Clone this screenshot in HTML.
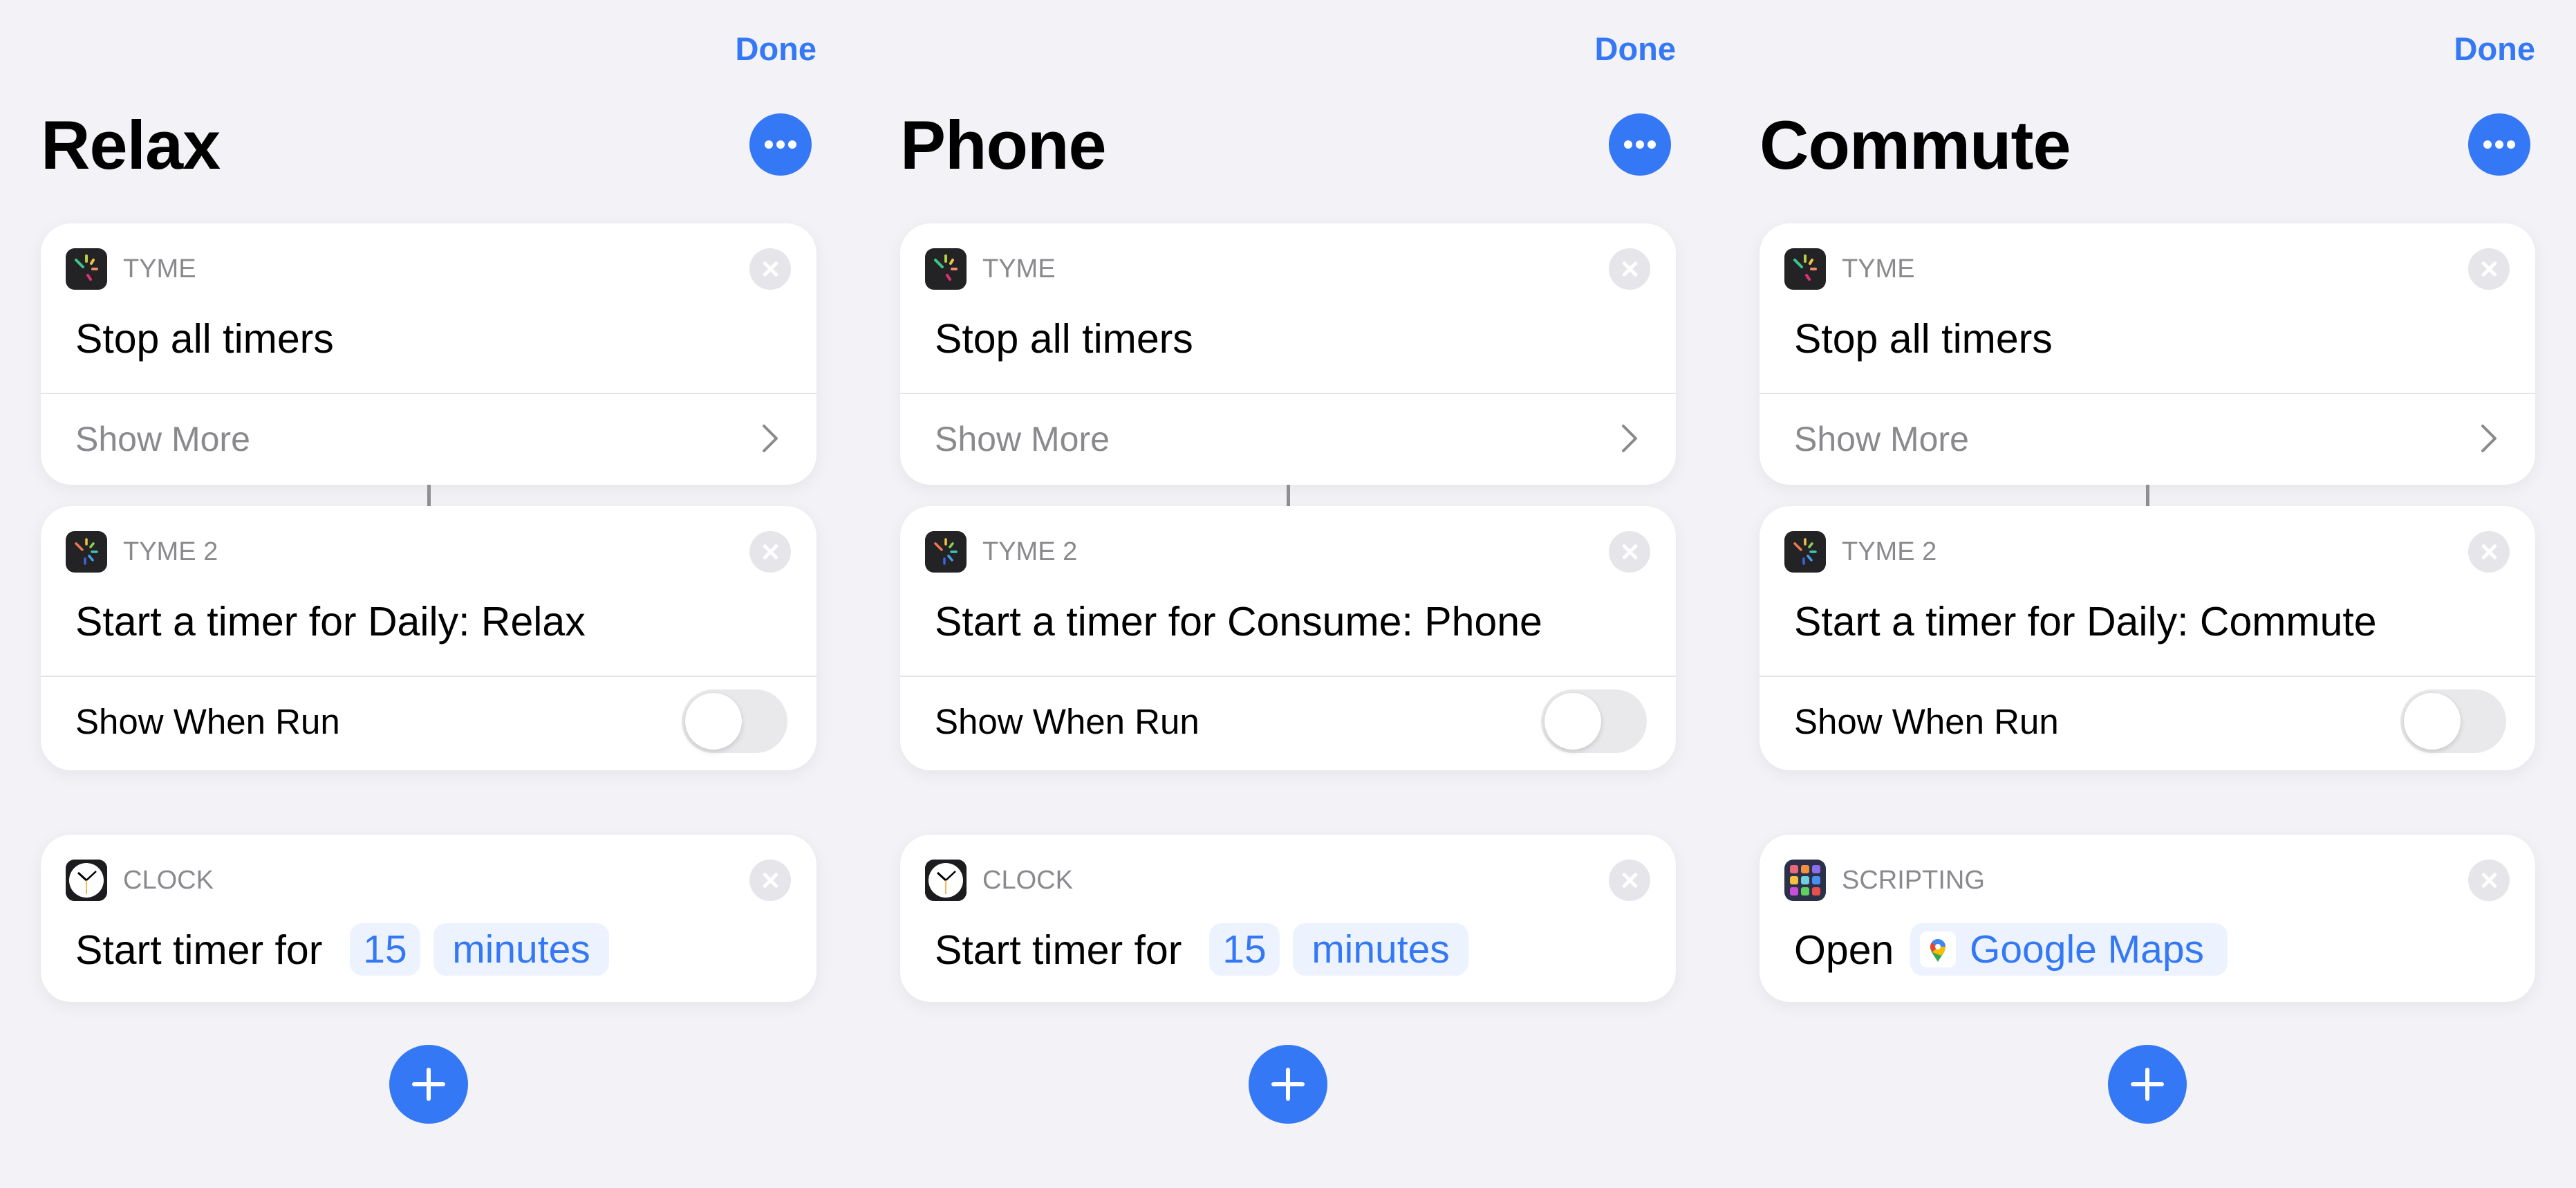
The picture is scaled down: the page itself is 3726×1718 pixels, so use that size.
<!DOCTYPE html>
<html><head><meta charset="utf-8"><style>
*{margin:0;padding:0;box-sizing:border-box}
body{width:3726px;height:1718px;background:#f2f2f7;font-family:"Liberation Sans",sans-serif;position:relative;overflow:hidden}
.p{position:absolute;top:0;width:1243px;height:1718px}
.done{position:absolute;right:62px;top:42px;font-size:47px;font-weight:bold;color:#3478f6;line-height:58px}
.title{position:absolute;left:59px;top:155px;font-size:99px;font-weight:bold;line-height:110px;color:#000;letter-spacing:-1px}
.more{position:absolute;left:1084px;top:164px;width:90px;height:90px;border-radius:50%;background:#3478f6}
.more i{position:absolute;top:39px;width:12px;height:12px;border-radius:50%;background:#fff}
.card{position:absolute;left:59px;width:1122px;background:#fff;border-radius:44px;box-shadow:0 6px 24px rgba(0,0,0,0.06)}
.ic{position:absolute;left:36px;top:36px;width:60px;height:60px;border-radius:13px;background:#232325;overflow:hidden}
.lab{position:absolute;left:119px;top:42px;font-size:38px;line-height:48px;color:#8a8a8e}
.x{position:absolute;left:1025px;top:36px;width:60px;height:60px;border-radius:50%;background:#e5e5ea}
.x:before,.x:after{content:"";position:absolute;left:28px;top:16px;width:5px;height:28px;background:#fff;border-radius:2px;transform:rotate(45deg)}
.x:after{transform:rotate(-45deg)}
.t{position:absolute;left:50px;top:134px;font-size:59px;line-height:66px;color:#000;white-space:nowrap}
.div{position:absolute;left:0;right:0;top:245px;height:2px;background:#e4e4e8}
.sm{position:absolute;left:50px;top:283px;font-size:50px;line-height:58px;color:#8a8a8e}
.sw{position:absolute;left:50px;top:283px;font-size:51px;line-height:58px;color:#000}
.chev{position:absolute;left:1040px;top:289px;width:30px;height:44px}
.tog{position:absolute;left:927px;top:265px;width:153px;height:92px;border-radius:46px;background:#e9e9eb}
.tog i{position:absolute;left:5px;top:5px;width:82px;height:82px;border-radius:50%;background:#fff;box-shadow:0 3px 8px rgba(0,0,0,0.15),0 0 1px rgba(0,0,0,0.1)}
.conn{position:absolute;left:618px;top:701px;width:5px;height:31px;background:#8e8e93}
.chip{position:absolute;top:128px;height:76px;border-radius:18px;background:#edf3fe;color:#3478f6;font-size:57px;line-height:76px;text-align:center}
.plus{position:absolute;left:563px;top:1511px;width:114px;height:114px;border-radius:50%;background:#3478f6}
.plus:before{content:"";position:absolute;left:54px;top:33px;width:6px;height:48px;background:#fff;border-radius:3px}
.plus:after{content:"";position:absolute;left:33px;top:54px;width:48px;height:6px;background:#fff;border-radius:3px}
</style></head><body>

<div class="p" style="left:0">
 <div class="done">Done</div>
 <div class="title">Relax</div>
 <div class="more"><i style="left:22px"></i><i style="left:39px"></i><i style="left:56px"></i></div>
 <div class="card" style="top:323px;height:378px">
  <div class="ic"><svg width="60" height="60" viewBox="0 0 60 60"><g stroke-width="4" stroke-linecap="round"><line x1="15" y1="17" x2="25" y2="27" stroke="#3cc58e"/><line x1="30" y1="11" x2="30" y2="19" stroke="#b5d040"/><line x1="40" y1="17" x2="37" y2="22" stroke="#f2c347"/><line x1="39" y1="30" x2="45" y2="30" stroke="#f08a6a"/><line x1="32" y1="39" x2="36" y2="45" stroke="#e0307a"/></g></svg></div>
  <div class="lab">TYME</div><div class="x"></div>
  <div class="t">Stop all timers</div>
  <div class="div"></div>
  <div class="sm">Show More</div>
  <svg class="chev" viewBox="0 0 30 44"><path d="M6 4 L24 22 L6 40" fill="none" stroke="#8a8a8e" stroke-width="4" stroke-linecap="round" stroke-linejoin="round"/></svg>
 </div>
 <div class="conn"></div>
 <div class="card" style="top:732px;height:382px">
  <div class="ic"><svg width="60" height="60" viewBox="0 0 60 60"><g stroke-width="3.5" stroke-linecap="round"><line x1="15" y1="18" x2="24" y2="27" stroke="#f07850"/><line x1="30" y1="12" x2="30" y2="19" stroke="#f2c347"/><line x1="40" y1="18" x2="36" y2="23" stroke="#8cd050"/><line x1="38" y1="30" x2="45" y2="30" stroke="#3cc5b0"/><line x1="34" y1="36" x2="39" y2="42" stroke="#40a0f0"/><line x1="28" y1="40" x2="28" y2="47" stroke="#4060e0"/></g></svg></div>
  <div class="lab">TYME 2</div><div class="x"></div>
  <div class="t">Start a timer for Daily: Relax</div>
  <div class="div"></div>
  <div class="sw">Show When Run</div>
  <div class="tog"><i></i></div>
 </div>
 <div class="card" style="top:1207px;height:242px">
  <div class="ic"><svg width="60" height="60" viewBox="0 0 60 60"><rect width="60" height="60" fill="#1c1c1e"/><circle cx="30" cy="30" r="25" fill="#fff"/><line x1="30" y1="30" x2="18" y2="19" stroke="#000" stroke-width="3"/><line x1="30" y1="30" x2="44" y2="17" stroke="#000" stroke-width="2.5"/><line x1="30" y1="30" x2="30" y2="50" stroke="#f0a020" stroke-width="1.5"/></svg></div>
  <div class="lab">CLOCK</div><div class="x"></div>
  <div class="t">Start timer for</div>
  <div class="chip" style="left:447px;width:102px">15</div>
  <div class="chip" style="left:568px;width:254px">minutes</div>
 </div>
 <div class="plus"></div>
</div>

<div class="p" style="left:1243px">
 <div class="done">Done</div>
 <div class="title">Phone</div>
 <div class="more"><i style="left:22px"></i><i style="left:39px"></i><i style="left:56px"></i></div>
 <div class="card" style="top:323px;height:378px">
  <div class="ic"><svg width="60" height="60" viewBox="0 0 60 60"><g stroke-width="4" stroke-linecap="round"><line x1="15" y1="17" x2="25" y2="27" stroke="#3cc58e"/><line x1="30" y1="11" x2="30" y2="19" stroke="#b5d040"/><line x1="40" y1="17" x2="37" y2="22" stroke="#f2c347"/><line x1="39" y1="30" x2="45" y2="30" stroke="#f08a6a"/><line x1="32" y1="39" x2="36" y2="45" stroke="#e0307a"/></g></svg></div>
  <div class="lab">TYME</div><div class="x"></div>
  <div class="t">Stop all timers</div>
  <div class="div"></div>
  <div class="sm">Show More</div>
  <svg class="chev" viewBox="0 0 30 44"><path d="M6 4 L24 22 L6 40" fill="none" stroke="#8a8a8e" stroke-width="4" stroke-linecap="round" stroke-linejoin="round"/></svg>
 </div>
 <div class="conn"></div>
 <div class="card" style="top:732px;height:382px">
  <div class="ic"><svg width="60" height="60" viewBox="0 0 60 60"><g stroke-width="3.5" stroke-linecap="round"><line x1="15" y1="18" x2="24" y2="27" stroke="#f07850"/><line x1="30" y1="12" x2="30" y2="19" stroke="#f2c347"/><line x1="40" y1="18" x2="36" y2="23" stroke="#8cd050"/><line x1="38" y1="30" x2="45" y2="30" stroke="#3cc5b0"/><line x1="34" y1="36" x2="39" y2="42" stroke="#40a0f0"/><line x1="28" y1="40" x2="28" y2="47" stroke="#4060e0"/></g></svg></div>
  <div class="lab">TYME 2</div><div class="x"></div>
  <div class="t">Start a timer for Consume: Phone</div>
  <div class="div"></div>
  <div class="sw">Show When Run</div>
  <div class="tog"><i></i></div>
 </div>
 <div class="card" style="top:1207px;height:242px">
  <div class="ic"><svg width="60" height="60" viewBox="0 0 60 60"><rect width="60" height="60" fill="#1c1c1e"/><circle cx="30" cy="30" r="25" fill="#fff"/><line x1="30" y1="30" x2="18" y2="19" stroke="#000" stroke-width="3"/><line x1="30" y1="30" x2="44" y2="17" stroke="#000" stroke-width="2.5"/><line x1="30" y1="30" x2="30" y2="50" stroke="#f0a020" stroke-width="1.5"/></svg></div>
  <div class="lab">CLOCK</div><div class="x"></div>
  <div class="t">Start timer for</div>
  <div class="chip" style="left:447px;width:102px">15</div>
  <div class="chip" style="left:568px;width:254px">minutes</div>
 </div>
 <div class="plus"></div>
</div>

<div class="p" style="left:2486px">
 <div class="done">Done</div>
 <div class="title">Commute</div>
 <div class="more"><i style="left:22px"></i><i style="left:39px"></i><i style="left:56px"></i></div>
 <div class="card" style="top:323px;height:378px">
  <div class="ic"><svg width="60" height="60" viewBox="0 0 60 60"><g stroke-width="4" stroke-linecap="round"><line x1="15" y1="17" x2="25" y2="27" stroke="#3cc58e"/><line x1="30" y1="11" x2="30" y2="19" stroke="#b5d040"/><line x1="40" y1="17" x2="37" y2="22" stroke="#f2c347"/><line x1="39" y1="30" x2="45" y2="30" stroke="#f08a6a"/><line x1="32" y1="39" x2="36" y2="45" stroke="#e0307a"/></g></svg></div>
  <div class="lab">TYME</div><div class="x"></div>
  <div class="t">Stop all timers</div>
  <div class="div"></div>
  <div class="sm">Show More</div>
  <svg class="chev" viewBox="0 0 30 44"><path d="M6 4 L24 22 L6 40" fill="none" stroke="#8a8a8e" stroke-width="4" stroke-linecap="round" stroke-linejoin="round"/></svg>
 </div>
 <div class="conn"></div>
 <div class="card" style="top:732px;height:382px">
  <div class="ic"><svg width="60" height="60" viewBox="0 0 60 60"><g stroke-width="3.5" stroke-linecap="round"><line x1="15" y1="18" x2="24" y2="27" stroke="#f07850"/><line x1="30" y1="12" x2="30" y2="19" stroke="#f2c347"/><line x1="40" y1="18" x2="36" y2="23" stroke="#8cd050"/><line x1="38" y1="30" x2="45" y2="30" stroke="#3cc5b0"/><line x1="34" y1="36" x2="39" y2="42" stroke="#40a0f0"/><line x1="28" y1="40" x2="28" y2="47" stroke="#4060e0"/></g></svg></div>
  <div class="lab">TYME 2</div><div class="x"></div>
  <div class="t">Start a timer for Daily: Commute</div>
  <div class="div"></div>
  <div class="sw">Show When Run</div>
  <div class="tog"><i></i></div>
 </div>
 <div class="card" style="top:1207px;height:242px">
  <div class="ic" style="background:#2c3048"><svg width="60" height="60" viewBox="0 0 60 60"><g><rect x="8" y="8" width="12" height="12" rx="3" fill="#e86a7a"/><rect x="24" y="8" width="12" height="12" rx="3" fill="#f09040"/><rect x="40" y="8" width="12" height="12" rx="3" fill="#8a70e8"/><rect x="8" y="24" width="12" height="12" rx="3" fill="#f5c040"/><rect x="24" y="24" width="12" height="12" rx="3" fill="#70d0e0"/><rect x="40" y="24" width="12" height="12" rx="3" fill="#4a90f0"/><rect x="8" y="40" width="12" height="12" rx="3" fill="#c850d8"/><rect x="24" y="40" width="12" height="12" rx="3" fill="#60d060"/><rect x="40" y="40" width="12" height="12" rx="3" fill="#e85050"/></g></svg></div>
  <div class="lab">SCRIPTING</div><div class="x"></div>
  <div class="t">Open</div>
  <div class="chip" style="left:218px;width:459px;text-align:left;padding-left:86px">Google Maps</div>
  <div style="position:absolute;left:232px;top:140px;width:52px;height:52px;border-radius:10px;background:#fff"><svg width="52" height="52" viewBox="0 0 52 52"><path d="M26 44 C20 34 15 29 15 22 A11 11 0 0 1 37 22 C37 29 32 34 26 44Z" fill="#34a853"/><path d="M17 16 A11 11 0 0 1 26 11 L26 22 Z" fill="#4285f4"/><path d="M15 22 A11 11 0 0 1 17 16 L26 22 L18 30 C16 27 15 25 15 22Z" fill="#ea4335"/><path d="M18 30 L26 22 L37 22 C37 27 34 31 31 35 Z" fill="#fbbc04"/><path d="M26 11 A11 11 0 0 1 37 22 L26 22Z" fill="#4285f4"/><circle cx="26" cy="22" r="4" fill="#fff"/></svg></div>
 </div>
 <div class="plus"></div>
</div>
</body></html>
